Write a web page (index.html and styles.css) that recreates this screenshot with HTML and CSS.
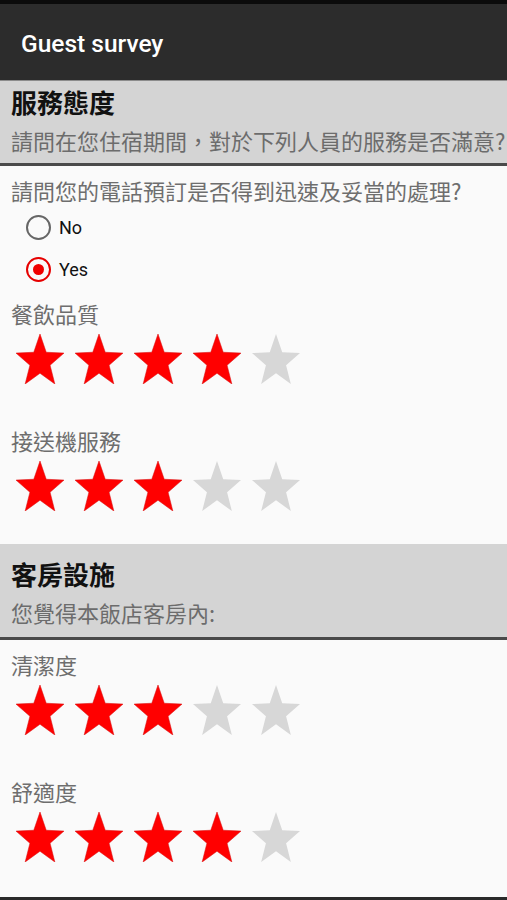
FILE: index.html
```html
<!DOCTYPE html>
<html lang="zh-Hant">
<head>
<meta charset="utf-8">
<title>Guest survey</title>
<link rel="stylesheet" href="styles.css">
</head>
<body>
<div class="statusbar"></div>
<header class="toolbar"><h1 class="app-title">Guest survey</h1></header>

<section class="group">
  <div class="group-head head-first">
    <h2 class="group-title">服務態度</h2>
    <p class="group-sub">請問在您住宿期間，對於下列人員的服務是否滿意?</p>
  </div>
  <div class="group-body">
    <p class="question">請問您的電話預訂是否得到迅速及妥當的處理?</p>
    <div class="radios">
      <label class="radio"><span class="dot"></span><span class="radio-text">No</span></label>
      <label class="radio checked"><span class="dot"></span><span class="radio-text">Yes</span></label>
    </div>
    <div class="rating">
      <p class="label">餐飲品質</p>
      <div class="stars">
        <svg class="star on" viewBox="-95.11 -100 190.22 180.9" preserveAspectRatio="none"><polygon points="0,-100 24.69,-33.98 95.11,-30.9 39.95,12.98 58.78,80.9 0,42 -58.78,80.9 -39.95,12.98 -95.11,-30.9 -24.69,-33.98"/></svg>
        <svg class="star on" viewBox="-95.11 -100 190.22 180.9" preserveAspectRatio="none"><polygon points="0,-100 24.69,-33.98 95.11,-30.9 39.95,12.98 58.78,80.9 0,42 -58.78,80.9 -39.95,12.98 -95.11,-30.9 -24.69,-33.98"/></svg>
        <svg class="star on" viewBox="-95.11 -100 190.22 180.9" preserveAspectRatio="none"><polygon points="0,-100 24.69,-33.98 95.11,-30.9 39.95,12.98 58.78,80.9 0,42 -58.78,80.9 -39.95,12.98 -95.11,-30.9 -24.69,-33.98"/></svg>
        <svg class="star on" viewBox="-95.11 -100 190.22 180.9" preserveAspectRatio="none"><polygon points="0,-100 24.69,-33.98 95.11,-30.9 39.95,12.98 58.78,80.9 0,42 -58.78,80.9 -39.95,12.98 -95.11,-30.9 -24.69,-33.98"/></svg>
        <svg class="star off" viewBox="-95.11 -100 190.22 180.9" preserveAspectRatio="none"><polygon points="0,-100 24.69,-33.98 95.11,-30.9 39.95,12.98 58.78,80.9 0,42 -58.78,80.9 -39.95,12.98 -95.11,-30.9 -24.69,-33.98"/></svg>
      </div>
    </div>
    <div class="rating">
      <p class="label">接送機服務</p>
      <div class="stars">
        <svg class="star on" viewBox="-95.11 -100 190.22 180.9" preserveAspectRatio="none"><polygon points="0,-100 24.69,-33.98 95.11,-30.9 39.95,12.98 58.78,80.9 0,42 -58.78,80.9 -39.95,12.98 -95.11,-30.9 -24.69,-33.98"/></svg>
        <svg class="star on" viewBox="-95.11 -100 190.22 180.9" preserveAspectRatio="none"><polygon points="0,-100 24.69,-33.98 95.11,-30.9 39.95,12.98 58.78,80.9 0,42 -58.78,80.9 -39.95,12.98 -95.11,-30.9 -24.69,-33.98"/></svg>
        <svg class="star on" viewBox="-95.11 -100 190.22 180.9" preserveAspectRatio="none"><polygon points="0,-100 24.69,-33.98 95.11,-30.9 39.95,12.98 58.78,80.9 0,42 -58.78,80.9 -39.95,12.98 -95.11,-30.9 -24.69,-33.98"/></svg>
        <svg class="star off" viewBox="-95.11 -100 190.22 180.9" preserveAspectRatio="none"><polygon points="0,-100 24.69,-33.98 95.11,-30.9 39.95,12.98 58.78,80.9 0,42 -58.78,80.9 -39.95,12.98 -95.11,-30.9 -24.69,-33.98"/></svg>
        <svg class="star off" viewBox="-95.11 -100 190.22 180.9" preserveAspectRatio="none"><polygon points="0,-100 24.69,-33.98 95.11,-30.9 39.95,12.98 58.78,80.9 0,42 -58.78,80.9 -39.95,12.98 -95.11,-30.9 -24.69,-33.98"/></svg>
      </div>
    </div>
  </div>
</section>

<section class="group">
  <div class="group-head head-second">
    <h2 class="group-title">客房設施</h2>
    <p class="group-sub">您覺得本飯店客房內:</p>
  </div>
  <div class="group-body body-last">
    <div class="rating">
      <p class="label">清潔度</p>
      <div class="stars">
        <svg class="star on" viewBox="-95.11 -100 190.22 180.9" preserveAspectRatio="none"><polygon points="0,-100 24.69,-33.98 95.11,-30.9 39.95,12.98 58.78,80.9 0,42 -58.78,80.9 -39.95,12.98 -95.11,-30.9 -24.69,-33.98"/></svg>
        <svg class="star on" viewBox="-95.11 -100 190.22 180.9" preserveAspectRatio="none"><polygon points="0,-100 24.69,-33.98 95.11,-30.9 39.95,12.98 58.78,80.9 0,42 -58.78,80.9 -39.95,12.98 -95.11,-30.9 -24.69,-33.98"/></svg>
        <svg class="star on" viewBox="-95.11 -100 190.22 180.9" preserveAspectRatio="none"><polygon points="0,-100 24.69,-33.98 95.11,-30.9 39.95,12.98 58.78,80.9 0,42 -58.78,80.9 -39.95,12.98 -95.11,-30.9 -24.69,-33.98"/></svg>
        <svg class="star off" viewBox="-95.11 -100 190.22 180.9" preserveAspectRatio="none"><polygon points="0,-100 24.69,-33.98 95.11,-30.9 39.95,12.98 58.78,80.9 0,42 -58.78,80.9 -39.95,12.98 -95.11,-30.9 -24.69,-33.98"/></svg>
        <svg class="star off" viewBox="-95.11 -100 190.22 180.9" preserveAspectRatio="none"><polygon points="0,-100 24.69,-33.98 95.11,-30.9 39.95,12.98 58.78,80.9 0,42 -58.78,80.9 -39.95,12.98 -95.11,-30.9 -24.69,-33.98"/></svg>
      </div>
    </div>
    <div class="rating">
      <p class="label">舒適度</p>
      <div class="stars">
        <svg class="star on" viewBox="-95.11 -100 190.22 180.9" preserveAspectRatio="none"><polygon points="0,-100 24.69,-33.98 95.11,-30.9 39.95,12.98 58.78,80.9 0,42 -58.78,80.9 -39.95,12.98 -95.11,-30.9 -24.69,-33.98"/></svg>
        <svg class="star on" viewBox="-95.11 -100 190.22 180.9" preserveAspectRatio="none"><polygon points="0,-100 24.69,-33.98 95.11,-30.9 39.95,12.98 58.78,80.9 0,42 -58.78,80.9 -39.95,12.98 -95.11,-30.9 -24.69,-33.98"/></svg>
        <svg class="star on" viewBox="-95.11 -100 190.22 180.9" preserveAspectRatio="none"><polygon points="0,-100 24.69,-33.98 95.11,-30.9 39.95,12.98 58.78,80.9 0,42 -58.78,80.9 -39.95,12.98 -95.11,-30.9 -24.69,-33.98"/></svg>
        <svg class="star on" viewBox="-95.11 -100 190.22 180.9" preserveAspectRatio="none"><polygon points="0,-100 24.69,-33.98 95.11,-30.9 39.95,12.98 58.78,80.9 0,42 -58.78,80.9 -39.95,12.98 -95.11,-30.9 -24.69,-33.98"/></svg>
        <svg class="star off" viewBox="-95.11 -100 190.22 180.9" preserveAspectRatio="none"><polygon points="0,-100 24.69,-33.98 95.11,-30.9 39.95,12.98 58.78,80.9 0,42 -58.78,80.9 -39.95,12.98 -95.11,-30.9 -24.69,-33.98"/></svg>
      </div>
    </div>
  </div>
</section>
<div class="bottom-edge"></div>
</body>
</html>
```

FILE: styles.css
```css
* { box-sizing: border-box; }
html, body {
  margin: 0;
  padding: 0;
}
body {
  background: #fafafa;
  font-family: "Noto Sans CJK TC", "Noto Sans", sans-serif;
  width: 507px;
  height: 900px;
  overflow: hidden;
}
.statusbar {
  height: 4px;
  background: #0b0b0b;
}
.toolbar {
  height: 77px;
  background: #2c2c2c;
  border-bottom: 1px solid #8c8c8c;
  display: flex;
  align-items: center;
  padding-left: 21px;
  padding-top: 3px;
}
.app-title {
  margin: 0;
  color: #ffffff;
  font-family: Roboto, "Liberation Sans", sans-serif;
  font-weight: 500;
  font-size: 24.5px;
  line-height: 30px;
}
.group-head {
  background: #d4d4d4;
  border-bottom: 3px solid #4a4a4a;
  padding: 0 0 0 11px;
}
.head-first {
  padding-top: 2px;
  padding-bottom: 4px;
}
.head-second {
  padding-top: 11px;
  padding-bottom: 6px;
}
.group-title {
  margin: 0;
  font-size: 26px;
  font-weight: 700;
  line-height: 38px;
  color: #111111;
}
.group-sub {
  margin: 0;
  font-size: 22px;
  line-height: 38px;
  color: #6c6c6c;
  white-space: nowrap;
}
.group-body {
  padding: 9px 0 0 0;
}
.question {
  margin: 0 0 0 11px;
  font-size: 22px;
  line-height: 30px;
  color: #6e6e6e;
}
.radios {
  display: flex;
  flex-direction: column;
  margin-top: 1px;
  margin-bottom: 8px;
}
.radio {
  height: 42px;
  display: flex;
  align-items: center;
  padding-left: 26px;
  gap: 8px;
}
.dot {
  width: 25px;
  height: 25px;
  border-radius: 50%;
  border: 2.5px solid #666666;
  display: flex;
  align-items: center;
  justify-content: center;
}
.checked .dot {
  border-color: #e60000;
}
.checked .dot::after {
  content: "";
  width: 11px;
  height: 11px;
  border-radius: 50%;
  background: #f00000;
}
.radio-text {
  font-family: Roboto, "Liberation Sans", sans-serif;
  font-size: 18px;
  color: #111111;
}
.rating {
  margin-bottom: 39px;
}
.rating:last-child {
  margin-bottom: 31px;
}
.body-last .rating:last-child {
  margin-bottom: 33px;
}
.label {
  margin: 0 0 0 11px;
  font-size: 22px;
  line-height: 30px;
  color: #6e6e6e;
}
.stars {
  display: flex;
  gap: 11px;
  margin-top: 6px;
  padding-left: 16px;
  height: 52px;
  align-items: flex-start;
}
.star {
  width: 48px;
  height: 50px;
  display: block;
}
.star.on polygon { fill: #ff0000; stroke: #d81010; stroke-width: 2; stroke-linejoin: miter; }
.star.off polygon { fill: #d7d7d7; }
.bottom-edge {
  height: 3px;
  background: #2a2a2a;
}
```
